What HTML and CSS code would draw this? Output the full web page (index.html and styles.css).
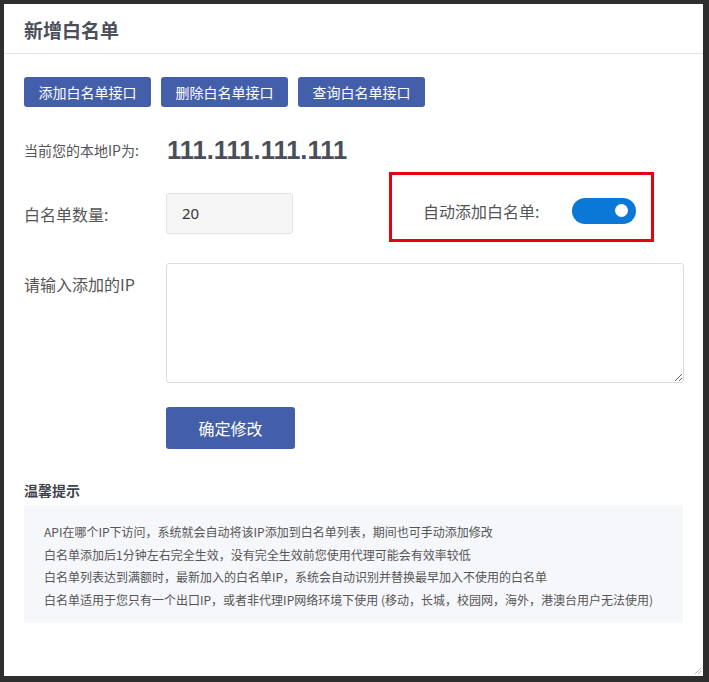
FILE: index.html
```html
<!DOCTYPE html>
<html lang="zh-CN">
<head>
<meta charset="utf-8">
<title>新增白名单</title>
<link rel="stylesheet" href="styles.css">
</head>
<body>
<div class="modal">
  <div class="modal-header">新增白名单</div>
  <div class="modal-body">
    <div class="btn-row">
      <button class="btn">添加白名单接口</button>
      <button class="btn">删除白名单接口</button>
      <button class="btn">查询白名单接口</button>
    </div>
    <div class="ip-row">
      <span class="ip-label">当前您的本地IP为:</span>
      <span class="ip-value">111.111.111.111</span>
    </div>
    <div class="count-row">
      <span class="field-label">白名单数量:</span>
      <div class="count-input">20</div>
      <div class="auto-group">
        <span class="auto-label">自动添加白名单:</span>
        <span class="toggle"><span class="knob"></span></span>
      </div>
      <div class="highlight"></div>
    </div>
    <div class="ip-input-row">
      <span class="field-label area-label">请输入添加的IP</span>
      <textarea class="ip-area"></textarea>
    </div>
    <div class="submit-row">
      <button class="btn btn-lg">确定修改</button>
    </div>
    <div class="tips-title">温馨提示</div>
    <div class="tips">
      <p>API在哪个IP下访问，系统就会自动将该IP添加到白名单列表，期间也可手动添加修改</p>
      <p>白名单添加后1分钟左右完全生效，没有完全生效前您使用代理可能会有效率较低</p>
      <p>白名单列表达到满额时，最新加入的白名单IP，系统会自动识别并替换最早加入不使用的白名单</p>
      <p>白名单适用于您只有一个出口IP，或者非代理IP网络环境下使用 (移动，长城，校园网，海外，港澳台用户无法使用)</p>
    </div>
  </div>
  <svg class="grip" width="8" height="8" viewBox="0 0 8 8"><path d="M7 1 L1 7 M7 4 L4 7" stroke="#bbb" stroke-width="1" fill="none"/></svg>
</div>
</body>
</html>
```

FILE: styles.css
```css
* { box-sizing: border-box; }
html, body { margin: 0; padding: 0; }
body {
  background: #2e2e2e;
  width: 709px;
  height: 682px;
  overflow: hidden;
  font-family: "Noto Sans CJK SC", "Noto Sans", sans-serif;
  color: #555;
}
.modal {
  position: relative;
  margin: 4px 0 0 4px;
  width: 699px;
  height: 672px;
  background: #fff;
}
.modal-header {
  height: 50px;
  padding: 3px 0 0 20px;
  line-height: 46px;
  font-size: 19px;
  font-weight: 700;
  color: #4a4f5a;
  border-bottom: 1px solid #e4e4e4;
}
.modal-body {
  padding: 0 19px 0 20px;
}
.btn {
  border: none;
  background: #445fa9;
  color: #fff;
  font-family: "Noto Sans CJK SC", sans-serif;
  font-size: 14px;
  border-radius: 3px;
  height: 30px;
  width: 127px;
  padding: 0;
  line-height: 30px;
}
.btn-row {
  display: flex;
  gap: 10px;
  margin-top: 23px;
}
.ip-row {
  display: flex;
  align-items: center;
  height: 40px;
  margin-top: 23px;
}
.ip-label {
  width: 142px;
  font-size: 14px;
  color: #555;
}
.ip-value {
  font-family: "Liberation Sans", Arial, sans-serif;
  font-weight: 700;
  font-size: 25.5px;
  color: #4a4e59;
  padding-left: 1px;
}
.count-row {
  position: relative;
  display: flex;
  align-items: center;
  height: 41px;
  margin-top: 23px;
}
.field-label {
  width: 142px;
  font-size: 16px;
  color: #555;
}
.count-input {
  width: 127px;
  height: 41px;
  background: #f6f6f6;
  border: 1px solid #e2e2e2;
  border-radius: 3px;
  padding-left: 15px;
  line-height: 39px;
  font-family: "Noto Sans", sans-serif;
  font-size: 15px;
  color: #333;
}
.auto-group {
  display: flex;
  align-items: center;
  margin-left: 130px;
  margin-bottom: 6px;
}
.auto-label {
  font-size: 16px;
  color: #555;
  width: 149px;
}
.toggle {
  position: relative;
  display: block;
  width: 64px;
  height: 26px;
  border-radius: 13px;
  background: #0b78d7;
}
.knob {
  position: absolute;
  right: 8px;
  top: 6px;
  width: 13px;
  height: 13px;
  border-radius: 50%;
  background: #fff;
}
.highlight {
  position: absolute;
  left: 365px;
  top: -21px;
  width: 265px;
  height: 70px;
  border: 3px solid #e50012;
  pointer-events: none;
}
.ip-input-row {
  display: flex;
  align-items: flex-start;
  margin-top: 29px;
}
.area-label {
  padding-top: 10px;
  line-height: 22px;
}
.ip-area {
  display: block;
  width: 518px;
  height: 120px;
  margin: 0;
  border: 1px solid #dcdcdc;
  border-radius: 3px;
  background: #fff;
  font-family: "Noto Sans CJK SC", sans-serif;
  font-size: 14px;
  padding: 6px 10px;
}
.submit-row {
  margin-top: 24px;
  padding-left: 142px;
}
.btn-lg {
  width: 129px;
  height: 42px;
  line-height: 42px;
  font-size: 16px;
}
.tips-title {
  margin-top: 31px;
  font-size: 14px;
  font-weight: 700;
  line-height: 20px;
  color: #3f434c;
}
.tips {
  margin-top: 5px;
  width: 659px;
  height: 118px;
  background: #f6f7fb;
  padding: 16px 20px 0 20px;
}
.tips p {
  margin: 0;
  font-size: 12px;
  line-height: 22.7px;
  color: #555;
  white-space: nowrap;
}
.grip {
  position: absolute;
  right: 1px;
  bottom: 1px;
}
```
